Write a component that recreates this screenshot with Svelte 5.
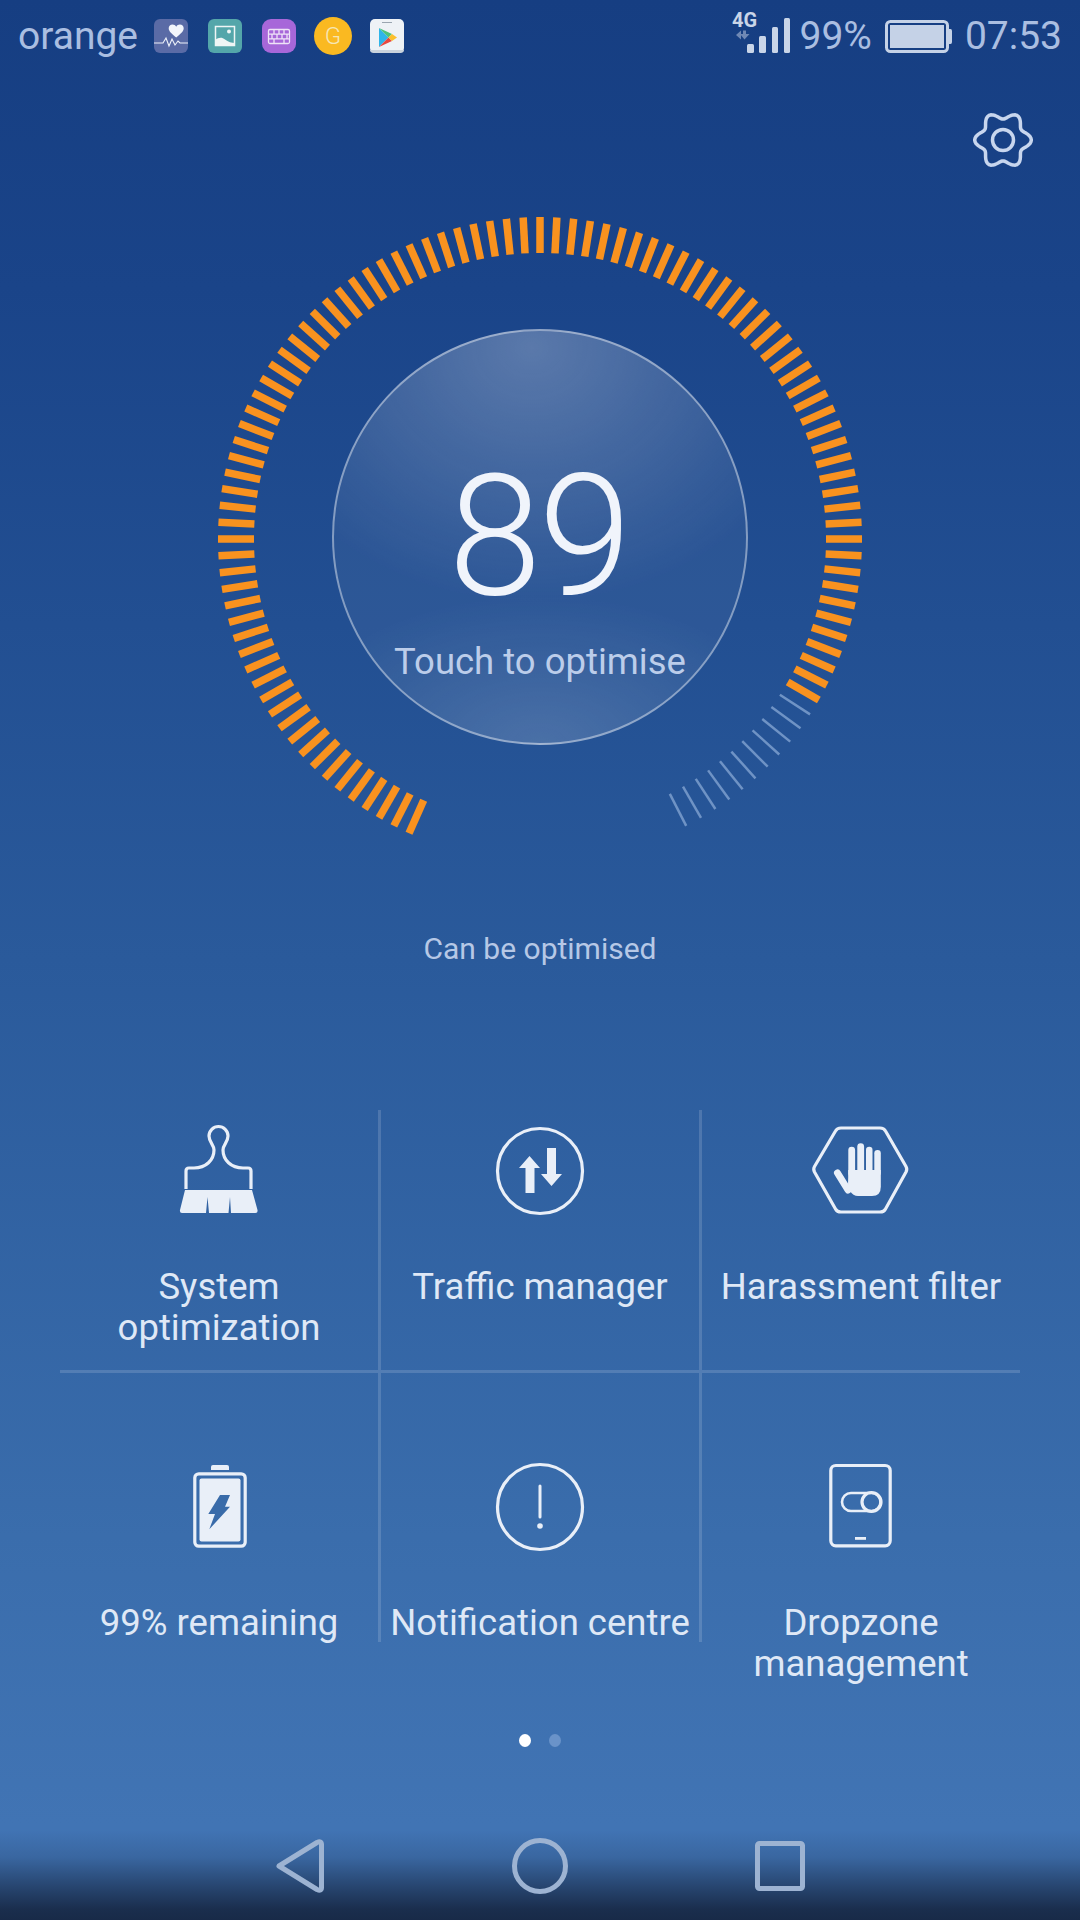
<script lang="ts">
	const score = 89;
	const ticks = [];
	const total = 104;
	const lit = 93;
	for (let i = 0; i < total; i++) {
		ticks.push({ angle: -156 + i * 3, on: i < lit });
	}

	// six-lobed gear outline
	let gear = '';
	for (let a = 0; a < 360; a += 4) {
		const t = (a * Math.PI) / 180;
		const r = 24.6 + 3.7 * Math.cos(6 * t);
		gear += (a === 0 ? 'M' : 'L') + (30 + r * Math.cos(t)).toFixed(2) + ' ' + (30 + r * Math.sin(t)).toFixed(2);
	}
	gear += 'Z';

	const cells = [
		{ id: 'brush', lines: ['System', 'optimization'] },
		{ id: 'traffic', lines: ['Traffic manager'] },
		{ id: 'hand', lines: ['Harassment filter'] },
		{ id: 'battery', lines: ['99% remaining'] },
		{ id: 'notice', lines: ['Notification centre'] },
		{ id: 'dropzone', lines: ['Dropzone', 'management'] }
	];
</script>

<div class="page">
	<header class="statusbar">
		<div class="status-left">
			<span class="carrier">orange</span>
			<div class="tiles">
				<svg class="tile" viewBox="0 0 34 34">
					<rect width="34" height="34" rx="6" fill="#5a6ba6" />
					<path d="M22.2 18.500C18 15 14.700 12.500 14.700 9.300 14.700 7 16.400 5.500 18.500 5.500 20 5.500 21.500 6.300 22.200 7.700 22.900 6.300 24.400 5.500 25.900 5.500 28 5.500 29.700 7 29.700 9.300 29.700 12.500 26.400 15 22.200 18.500z" fill="#f2f5fb" />
					<path d="M0 24H9l3-5 3 8 3-7 3 6 3-4 2 2H34" fill="none" stroke="#eef2fa" stroke-width="1.100" />
				</svg>
				<svg class="tile" viewBox="0 0 34 34">
					<rect width="34" height="34" rx="6" fill="#54a6aa" />
					<rect x="7.500" y="7.500" width="19" height="19" fill="none" stroke="#eef5f5" stroke-width="1.500" />
					<path d="M7 27V21c4-3 7-3 10-.500 3 2.500 7 3.500 10 3.500v3z" fill="#eef5f5" />
					<circle cx="21" cy="12.500" r="2" fill="#eef5f5" />
				</svg>
				<svg class="tile" viewBox="0 0 34 34">
					<rect width="34" height="34" rx="9" fill="#a767d9" />
					<g fill="none" stroke="#eee3f8" stroke-width="1.300">
						<rect x="6.500" y="10.500" width="21" height="14" rx="1.500" />
						<path d="M6.500 15.200H27.500M6.500 19.800H27.500M12 10.500V15.200M17 10.500V15.200M22 10.500V15.200M10 15.200V19.800M15 15.200V19.800M20 15.200V19.800M25 15.200V19.800M12 19.800V24.500M22 19.800V24.500" />
					</g>
				</svg>
				<div class="coin">G</div>
				<svg class="tile" viewBox="0 0 34 34">
					<rect width="34" height="34" rx="5" fill="#eef2f6" />
					<path d="M0 31H34Q34 34 30 34H4Q0 34 0 31z" fill="#c9d2dc" />
					<path d="M12 3.500h10" stroke="#9aa5b0" stroke-width="1" />
					<path d="M9 9V28L18.500 18.500z" fill="#2fb5ea" />
					<path d="M9 9L18.500 18.500 22 15z" fill="#4fc27c" />
					<path d="M9 28L18.500 18.500 22 22z" fill="#e8473f" />
					<path d="M22 15L27 18.500 22 22 18.500 18.500z" fill="#fbc02d" />
				</svg>
			</div>
		</div>
		<div class="status-right">
			<svg class="signal" viewBox="0 0 60 50">
				<text x="0" y="14" class="net">4G</text>
				<path d="M9 17.500v9l-5-4.500zM11 17.500h3v3.500h3.500l-5 5.500L8 21h3z" fill="#6f88b4" />
				<rect x="15" y="31" width="7" height="9" rx="1.500" fill="#c9d5e8" />
				<rect x="27" y="23" width="7" height="17" rx="1.500" fill="#c9d5e8" />
				<rect x="40" y="14" width="6" height="26" rx="1.500" fill="#c9d5e8" />
				<rect x="52" y="5" width="6" height="35" rx="1.500" fill="#c9d5e8" />
			</svg>
			<span class="percent">99%</span>
			<svg class="cell-batt" viewBox="0 0 67 33">
				<rect x="1.500" y="1.500" width="61" height="30" rx="4" fill="none" stroke="#c5d2e7" stroke-width="3" />
				<rect x="5" y="5" width="54" height="23" fill="#c5d2e7" />
				<path d="M64 9h1.500q1.500 0 1.500 2v11q0 2-1.500 2H64z" fill="#c5d2e7" />
			</svg>
			<span class="clock">07:53</span>
		</div>
	</header>

	<div class="toolbar">
		<svg class="gear" viewBox="0 0 60 60">
			<path d={gear} fill="none" stroke="#c8d6ee" stroke-width="3.500" stroke-linejoin="round" />
			<circle cx="30" cy="30" r="10.500" fill="none" stroke="#c8d6ee" stroke-width="3.500" />
		</svg>
	</div>

	<div class="gauge">
		<svg class="ring" viewBox="-330 -330 660 660">
			{#each ticks as t}
				{#if t.on}
					<line x1="0" y1="-286" x2="0" y2="-322" class="tick-on" transform="rotate({t.angle})" />
				{:else}
					<line x1="0" y1="-286" x2="0" y2="-322" class="tick-off" transform="rotate({t.angle})" />
				{/if}
			{/each}
		</svg>
		<div class="dial">
			<div class="score">{score}</div>
			<div class="hint">Touch to optimise</div>
		</div>
	</div>

	<p class="caption">Can be optimised</p>

	<section class="grid">
		{#each cells as c}
			<div class="cell">
				<svg class="icon" viewBox="0 0 100 100">
					{#if c.id === 'brush'}
						<path d="M17 68V50q0-3 3-3h5c12 0 20-8 20-18 0-5-5-8-5-14a9.500 9.500 0 0 1 19 0c0 6-5 9-5 14 0 10 8 18 20 18h5q3 0 3 3v18" class="line" />
						<path d="M16 69H83L88.500 89q.5 3-2 3H62L61 76 59.500 92H40L38.500 76 37 92H13q-2.500 0-2-3z" class="fill" />
					{:else if c.id === 'traffic'}
						<circle cx="50" cy="50" r="42.500" class="line" />
						<path d="M39.500 35L50 47H44.500V72h-9V47H29z" class="fill" />
						<path d="M57 27h9v26h6L61.500 65 51 53h6z" class="fill" />
					{:else if c.id === 'hand'}
						<path d="M3.500 45.500L24.500 10Q26 7 30 7H69Q73 7 74.500 10L95 45.500Q96.500 48 95 51L74.500 88Q73 91 69 91H30Q26 91 24.500 88L3.500 51Q2 48 3.500 45.500z" class="line" />
						<rect x="37.300" y="25.700" width="6.800" height="30" rx="3.400" class="fill" />
						<rect x="46.300" y="22.300" width="6.800" height="33" rx="3.400" class="fill" />
						<rect x="55" y="25.700" width="6.500" height="30" rx="3.200" class="fill" />
						<rect x="63.300" y="29" width="6.500" height="26" rx="3.200" class="fill" />
						<path d="M37.300 49H69.800V66Q69.800 75 61 75H47Q42 75 39 70L37 66z" class="fill" />
						<path d="M26.500 52L37 69" fill="none" stroke="#e9eff8" stroke-width="7" stroke-linecap="round" />
					{:else if c.id === 'battery'}
						<rect x="25.800" y="16.800" width="50.400" height="72.400" rx="4" class="line" />
						<rect x="30.500" y="21.500" width="41" height="63" rx="2" class="fill" />
						<path d="M42 13V10q0-2 2-2H58q2 0 2 2v3z" class="fill" />
						<path d="M51 38H61L56 49.700H61L40.300 72.300 46 57H39.300z" fill="#396ba9" />
					{:else if c.id === 'notice'}
						<circle cx="50" cy="50" r="42.500" class="line" />
						<path d="M50 29V60" fill="none" stroke="#e9eff8" stroke-width="3" stroke-linecap="round" />
						<circle cx="50" cy="69" r="2.800" class="fill" />
					{:else}
						<rect x="19.800" y="8.500" width="59.400" height="80.300" rx="5" class="line" />
						<rect x="31" y="36" width="38.500" height="18" rx="9" class="line thin" />
						<circle cx="60.500" cy="45" r="9.500" class="line" />
						<rect x="44" y="80" width="11" height="2.800" class="fill" />
					{/if}
				</svg>
				<div class="label">
					{#each c.lines as l}
						<div>{l}</div>
					{/each}
				</div>
			</div>
		{/each}
	</section>

	<div class="dots">
		<span class="dot active"></span>
		<span class="dot"></span>
	</div>

	<nav class="nav">
		<svg viewBox="0 0 60 60">
			<path d="M9 30L47 6.500Q51.500 4.500 51.500 8.500V51.500Q51.500 55.500 47 53.500z" class="nav-line" />
		</svg>
		<svg viewBox="0 0 60 60">
			<circle cx="30" cy="30" r="25.500" class="nav-line" />
		</svg>
		<svg viewBox="0 0 60 60">
			<rect x="7.500" y="7.500" width="45" height="45" rx="2" class="nav-line" />
		</svg>
	</nav>
</div>

<style>
	:global(body) {
		margin: 0;
	}

	.page {
		width: 1080px;
		height: 1920px;
		display: flex;
		flex-direction: column;
		overflow: hidden;
		font-family: Roboto, "Liberation Sans", sans-serif;
		background: linear-gradient(180deg, #163e82 0%, #1a4489 15%, #2a5a9b 50%, #3a6dac 80%, #4174b4 95%);
	}

	.statusbar {
		height: 72px;
		flex: none;
		display: flex;
		align-items: center;
		justify-content: space-between;
		padding: 0 18px 0 18px;
		color: #aabee1;
		font-size: 39px;
	}

	.status-left,
	.status-right {
		display: flex;
		align-items: center;
	}

	.tiles {
		display: flex;
		align-items: center;
		gap: 20px;
		margin-left: 16px;
	}

	.tile {
		width: 34px;
		height: 34px;
	}

	.coin {
		width: 38px;
		height: 38px;
		margin: 0 -2px;
		border-radius: 50%;
		background: #fab921;
		color: #f6e6b4;
		font-size: 24px;
		font-weight: 300;
		line-height: 38px;
		text-align: center;
	}

	.signal {
		width: 60px;
		height: 50px;
		margin-top: 4px;
		overflow: visible;
	}

	.net {
		font-size: 20px;
		font-weight: 700;
		fill: #c9d5e8;
		font-family: Roboto, sans-serif;
	}

	.percent {
		margin-left: 7px;
	}

	.cell-batt {
		width: 67px;
		height: 33px;
		margin-left: 13px;
	}

	.clock {
		margin-left: 13px;
	}

	.toolbar {
		flex: none;
		display: flex;
		justify-content: flex-end;
		height: 60px;
		margin-top: 38px;
		padding-right: 47px;
	}

	.gear {
		width: 60px;
		height: 60px;
	}

	.gauge {
		flex: none;
		display: grid;
		place-items: center;
		width: 660px;
		height: 660px;
		margin: 39px auto 0;
	}

	.ring,
	.dial {
		grid-area: 1 / 1;
	}

	.ring {
		width: 660px;
		height: 660px;
	}

	.tick-on {
		stroke: #f9921f;
		stroke-width: 7.500;
	}

	.tick-off {
		stroke: #6f93c5;
		stroke-width: 2.500;
	}

	.dial {
		box-sizing: border-box;
		width: 416px;
		height: 416px;
		margin-bottom: 4px;
		border: 2px solid rgba(255, 255, 255, 0.42);
		border-radius: 50%;
		background:
			radial-gradient(ellipse 72% 62% at 48% 4%, rgba(255, 255, 255, 0.24), rgba(255, 255, 255, 0) 100%),
			radial-gradient(ellipse 62% 36% at 50% 100%, rgba(255, 255, 255, 0.13), rgba(255, 255, 255, 0) 100%),
			rgba(255, 255, 255, 0.05);
		display: flex;
		flex-direction: column;
		align-items: center;
		text-align: center;
	}

	.score {
		margin: 126px 0 0 -3px;
		height: 160px;
		font-size: 168px;
		font-weight: 300;
		line-height: 160px;
		letter-spacing: -3px;
		color: #f0f4fb;
	}

	.hint {
		margin-top: 23px;
		font-size: 36.500px;
		line-height: 44px;
		color: #bccdea;
	}

	.caption {
		flex: none;
		margin: 60px 0 0;
		font-size: 30px;
		line-height: 40px;
		text-align: center;
		color: #b6c8e6;
	}

	.grid {
		flex: none;
		display: grid;
		grid-template-columns: 321px 321px 318px;
		grid-template-rows: 263px 269px;
		margin: 141px 60px 0;
	}

	.cell {
		box-sizing: border-box;
		padding-top: 11px;
		display: flex;
		flex-direction: column;
		align-items: center;
		border-right: 3px solid rgba(255, 255, 255, 0.15);
		border-bottom: 3px solid rgba(255, 255, 255, 0.15);
	}

	.cell:nth-child(3n) {
		border-right: none;
	}

	.cell:nth-child(n + 4) {
		padding-top: 84px;
		border-bottom: none;
	}

	.icon {
		flex: none;
		width: 100px;
		height: 100px;
		overflow: visible;
	}

	.line {
		fill: none;
		stroke: #e9eff8;
		stroke-width: 3.200;
		stroke-linejoin: round;
	}

	.line.thin {
		stroke-width: 2.600;
	}

	.fill {
		fill: #e9eff8;
	}

	.label {
		flex: none;
		margin-top: 45px;
		font-size: 36.500px;
		line-height: 41px;
		text-align: center;
		white-space: nowrap;
		color: #dfe8f6;
	}

	.dots {
		flex: none;
		display: flex;
		justify-content: center;
		gap: 18px;
		margin-top: 92px;
	}

	.dot {
		width: 12px;
		height: 13px;
		border-radius: 50%;
		background: #6a93c9;
	}

	.dot.active {
		background: #ffffff;
	}

	.nav {
		flex: none;
		margin-top: auto;
		height: 90px;
		display: flex;
		justify-content: center;
		align-items: flex-start;
		gap: 180px;
		padding-top: 6px;
		box-sizing: border-box;
		background: linear-gradient(180deg, rgba(24, 42, 72, 0) 0%, rgba(24, 42, 72, 0.18) 30%, rgba(24, 42, 72, 0.62) 62%, rgba(24, 42, 72, 0.95) 88%, rgba(24, 42, 72, 1) 100%);
	}

	.nav svg {
		width: 60px;
		height: 60px;
	}

	.nav-line {
		fill: none;
		stroke: #9db3d2;
		stroke-width: 5;
		stroke-linejoin: round;
	}
</style>
